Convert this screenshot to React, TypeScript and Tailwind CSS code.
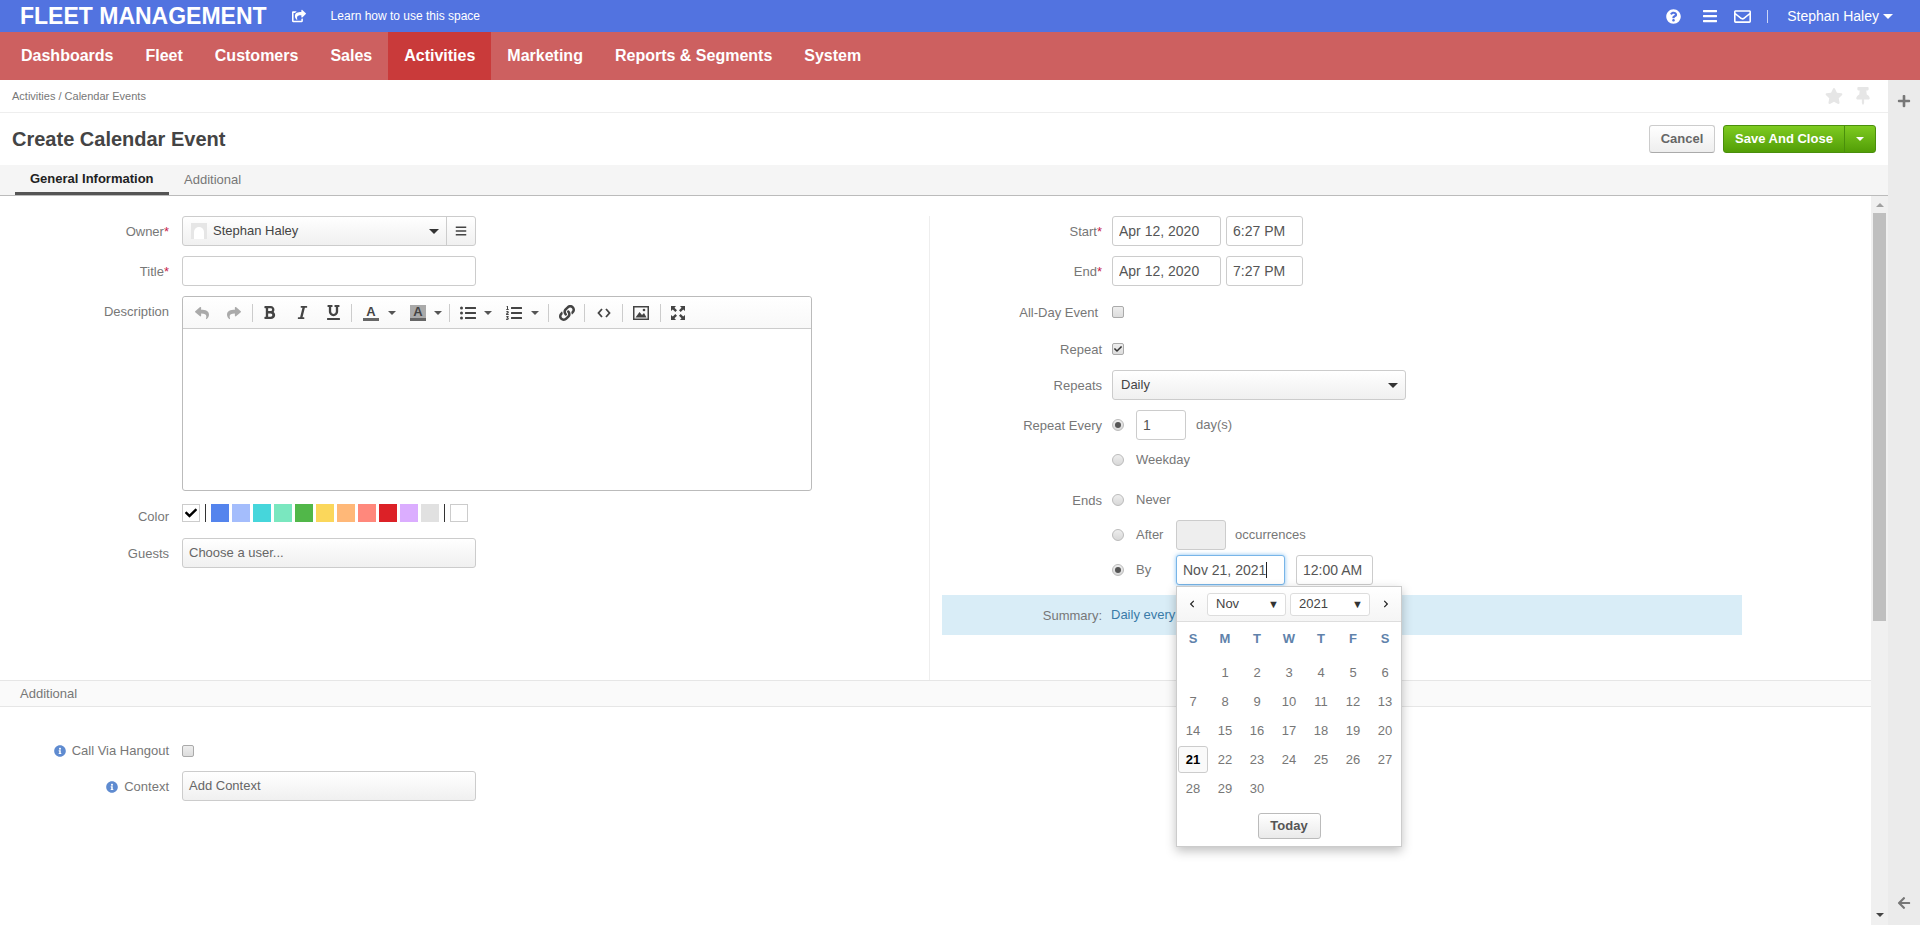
import type { ReactNode } from "react";
import {
  FaArrowLeft,
  FaBars,
  FaCheck,
  FaChevronLeft,
  FaChevronRight,
  FaInfoCircle,
  FaListOl,
  FaListUl,
  FaLink,
  FaPlus,
  FaQuestionCircle,
  FaRegEnvelope,
  FaReply,
  FaShare,
  FaShareSquare,
  FaStar,
  FaThumbtack,
  FaBold,
  FaItalic,
  FaUnderline,
} from "react-icons/fa";

const NAV = ["Dashboards", "Fleet", "Customers", "Sales", "Activities", "Marketing", "Reports & Segments", "System"];
const COLORS = [
  "bg-[#5484ed]",
  "bg-[#a4bdfc]",
  "bg-[#46d6db]",
  "bg-[#7ae7bf]",
  "bg-[#51b749]",
  "bg-[#fbd75b]",
  "bg-[#ffb878]",
  "bg-[#ff887c]",
  "bg-[#dc2127]",
  "bg-[#dbadff]",
  "bg-[#e1e1e1]",
];
const WEEK = ["S", "M", "T", "W", "T", "F", "S"];
const DAYS: (number | null)[] = [null, ...Array.from({ length: 30 }, (_, i) => i + 1)];

function Caret({ className = "" }: { className?: string }) {
  return <span className={`inline-block w-0 h-0 border-x-[5px] border-x-transparent border-t-[5px] ${className}`} />;
}

function SmallCaret({ className = "" }: { className?: string }) {
  return <span className={`inline-block w-0 h-0 border-x-[4px] border-x-transparent border-t-[4px] ${className}`} />;
}

function Label({ children, required, width, mr = "" }: { children: ReactNode; required?: boolean; width: string; mr?: string }) {
  return (
    <div className={`${width} ${mr} shrink-0 pt-px text-right text-[#777] text-[13px] leading-none`}>
      {children}
      {required && <span className="text-[#c81e4a]">*</span>}
    </div>
  );
}

function Checkbox({ checked }: { checked?: boolean }) {
  return (
    <div className="w-3 h-3 rounded-[2px] border border-[#aaa] bg-linear-to-b from-[#eee] to-[#ddd] flex items-center justify-center">
      {checked && <FaCheck className="w-2 h-2 text-[#333]" />}
    </div>
  );
}

function Radio({ checked }: { checked?: boolean }) {
  return (
    <div className="w-3 h-3 rounded-full border border-[#bbb] bg-linear-to-b from-[#eee] to-[#d8d8d8] flex items-center justify-center">
      {checked && <div className="w-1.5 h-1.5 rounded-full bg-[#555]" />}
    </div>
  );
}

function TextBox({ value, className }: { value?: string; className: string }) {
  return (
    <input
      readOnly
      value={value ?? ""}
      className={`h-[30px] px-[6px] border border-[#ccc] rounded-[3px] bg-white text-[#555] text-[14px] outline-none ${className}`}
    />
  );
}

function Sep() {
  return <div className="w-px h-[18px] bg-[#ccc]" />;
}

function Toolbar() {
  return (
    <div className="h-8 border-b border-[#ccc] rounded-t-[3px] bg-linear-to-b from-white to-[#f8f8f8] flex items-center text-[#444]">
      <div className="w-[18px] ml-[10px] flex justify-center"><FaReply className="w-3.5 h-3.5 text-[#aaa]" /></div>
      <div className="w-[18px] ml-[14px] flex justify-center"><FaShare className="w-3.5 h-3.5 text-[#aaa]" /></div>
      <div className="ml-[9px]"><Sep /></div>
      <div className="w-[16px] ml-[8px] flex justify-center"><FaBold className="w-[13px] h-[15px]" /></div>
      <div className="w-[16px] ml-[17px] flex justify-center"><FaItalic className="w-[13px] h-[15px]" /></div>
      <div className="w-[16px] ml-[15px] flex justify-center"><FaUnderline className="w-[13px] h-[15px]" /></div>
      <div className="ml-[10px]"><Sep /></div>
      <div className="ml-[11px] w-[16px] flex flex-col items-center">
        <span className="text-[13px] leading-[13px] font-bold">A</span>
        <div className="w-4 h-[3px] bg-[#666]" />
      </div>
      <SmallCaret className="ml-[9px] border-t-[#555]" />
      <div className="ml-[14px] w-[16px] flex flex-col items-center bg-[#aaa]">
        <span className="text-[13px] leading-[13px] font-bold">A</span>
        <div className="w-4 h-[3px] bg-[#666]" />
      </div>
      <SmallCaret className="ml-[8px] border-t-[#555]" />
      <div className="ml-[7px]"><Sep /></div>
      <FaListUl className="ml-[10px] w-4 h-4" />
      <SmallCaret className="ml-[8px] border-t-[#555]" />
      <FaListOl className="ml-[14px] w-4 h-4" />
      <SmallCaret className="ml-[9px] border-t-[#555]" />
      <div className="ml-[9px]"><Sep /></div>
      <FaLink className="ml-[10px] w-4 h-4" />
      <div className="ml-[9px]"><Sep /></div>
      <svg className="ml-[12px] w-3.5 h-3.5" viewBox="0 0 14 14" fill="none" stroke="currentColor" strokeWidth="1.8">
        <path d="M5 3 1.500 7 5 11M9 3l3.500 4L9 11" />
      </svg>
      <div className="ml-[11px]"><Sep /></div>
      <svg className="ml-[10px] w-4 h-[14px]" viewBox="0 0 16 14">
        <rect x="0.750" y="0.750" width="14.500" height="12.500" fill="none" stroke="#444" strokeWidth="1.500" />
        <path d="M2.500 11.500 6.500 6l2.500 3 2-2 2.500 4.500z" fill="#444" />
        <circle cx="11" cy="4" r="1.300" fill="#444" />
      </svg>
      <div className="ml-[11px]"><Sep /></div>
      <svg className="ml-[9px] w-4 h-4" viewBox="0 0 16 16" fill="currentColor">
        <path d="M1 1h5L4.500 2.800 7 5.300 5.300 7 2.800 4.500 1 6zM15 1v5l-1.800-1.500L10.700 7 9 5.300l2.500-2.500L10 1zM1 15v-5l1.800 1.500L5.300 9 7 10.700l-2.500 2.500L6 15zM15 15h-5l1.500-1.800L9 10.700 10.700 9l2.500 2.500L15 10z" />
      </svg>
    </div>
  );
}

function LeftColumn() {
  return (
    <div className="w-[930px] shrink-0 border-r border-[#eee] text-[13px]">
      <div className="flex items-center h-[30px]">
        <Label required width="w-[169px]" mr="mr-[13px]">Owner</Label>
        <div className="w-[294px] h-[30px] flex border border-[#ccc] rounded-[3px] bg-linear-to-b from-white to-[#f0f0f0]">
          <div className="flex-1 flex items-center pl-2 text-[#444] text-[13px]">
            <div className="w-4 h-4 mr-[6px] bg-[#e6e6e6] flex items-end justify-center overflow-hidden">
              <div className="w-2.5 h-3 rounded-t-full bg-white" />
            </div>
            <span>Stephan Haley</span>
            <Caret className="ml-auto mr-[7px] border-t-[#333]" />
          </div>
          <div className="w-[29px] border-l border-[#ccc] flex items-center justify-center text-[#444]">
            <FaBars className="w-3 h-3" />
          </div>
        </div>
      </div>
      <div className="flex items-center mt-[10px]">
        <Label required width="w-[169px]" mr="mr-[13px]">Title</Label>
        <TextBox className="w-[294px]" />
      </div>
      <div className="flex mt-[10px]">
        <div className="pt-[8px]"><Label width="w-[169px]" mr="mr-[13px]">Description</Label></div>
        <div className="w-[630px] h-[195px] border border-[#bbb] rounded-[3px]">
          <Toolbar />
        </div>
      </div>
      <div className="flex mt-[13px] h-[18px]">
        <div className="pt-[5px]"><Label width="w-[169px]" mr="mr-[13px]">Color</Label></div>
        <div className="flex items-center h-[18px]">
          <div className="w-[18px] h-[18px] border border-[#ccc] flex items-center justify-center">
            <FaCheck className="w-3 h-3 text-black" />
          </div>
          <div className="w-px h-[18px] bg-[#333] mx-[5px]" />
          <div className="flex gap-[3px]">
            {COLORS.map((c) => (
              <div key={c} className={`w-[18px] h-[18px] ${c}`} />
            ))}
          </div>
          <div className="w-px h-[18px] bg-[#333] ml-[5px] mr-[5px]" />
          <div className="w-[18px] h-[18px] border border-[#ccc] bg-white" />
        </div>
      </div>
      <div className="flex items-center mt-4">
        <Label width="w-[169px]" mr="mr-[13px]">Guests</Label>
        <div className="w-[294px] h-[30px] px-[6px] flex items-center border border-[#ccc] rounded-[3px] bg-linear-to-b from-white to-[#f0f0f0] text-[#666] text-[13px]">
          Choose a user...
        </div>
      </div>
    </div>
  );
}

function Calendar() {
  return (
    <div className="absolute left-0 top-[31px] z-10 w-[226px] h-[261px] border border-[#ccc] bg-white shadow-[0_4px_10px_rgba(0,0,0,0.25)] text-[13px]">
      <div className="h-[35px] border-b border-[#ddd] bg-linear-to-b from-white to-[#f5f5f5] flex items-center">
        <FaChevronLeft className="ml-[11px] w-2 h-2 text-[#222]" />
        <div className="ml-[11px] w-[79px] h-[23px] border border-[#ddd] rounded-[3px] bg-white flex items-center pl-2 text-[#444] text-[13px]">
          Nov
          <span className="ml-auto mr-[6px] text-[11px] text-[#333]">▼</span>
        </div>
        <div className="ml-1 w-[80px] h-[23px] border border-[#ddd] rounded-[3px] bg-white flex items-center pl-2 text-[#444] text-[13px]">
          2021
          <span className="ml-auto mr-[6px] text-[11px] text-[#333]">▼</span>
        </div>
        <FaChevronRight className="ml-[12px] w-2 h-2 text-[#222]" />
      </div>
      <div className="grid grid-cols-[repeat(7,32px)] pt-[4px]">
        {WEEK.map((d, i) => (
          <div key={i} className="h-[26px] flex items-center justify-center font-bold text-[#5f82ab] text-[13px]">
            {d}
          </div>
        ))}
      </div>
      <div className="grid grid-cols-[repeat(7,32px)] auto-rows-[29px] pt-[6px]">
        {DAYS.map((d, i) =>
          d === 21 ? (
            <div key={i} className="flex items-center justify-center">
              <span className="w-[30px] h-[27px] flex items-center justify-center border border-[#ccc] rounded-[3px] bg-[#fafafa] font-bold text-black">
                {d}
              </span>
            </div>
          ) : (
            <div key={i} className="flex items-center justify-center text-[#777]">
              {d}
            </div>
          ),
        )}
      </div>
      <div className="flex justify-center mt-[10px]">
        <button className="w-[63px] h-[26px] border border-[#bbb] rounded-[3px] bg-linear-to-b from-white to-[#eaeaea] text-[#555] font-bold text-[13px]">
          Today
        </button>
      </div>
    </div>
  );
}

function RightColumn() {
  const w = "w-[172px]";
  const mr = "mr-[10px]";
  return (
    <div className="flex-1 text-[13px] text-[#777]">
      <div className="flex items-center">
        <Label required width={w} mr={mr}>Start</Label>
        <TextBox value="Apr 12, 2020" className="w-[109px]" />
        <TextBox value="6:27 PM" className="w-[77px] ml-[5px]" />
      </div>
      <div className="flex items-center mt-[10px]">
        <Label required width={w} mr={mr}>End</Label>
        <TextBox value="Apr 12, 2020" className="w-[109px]" />
        <TextBox value="7:27 PM" className="w-[77px] ml-[5px]" />
      </div>
      <div className="flex items-center mt-[20px] h-3">
        <Label width="w-[168px]" mr="mr-[14px]">All-Day Event</Label>
        <Checkbox />
      </div>
      <div className="flex items-center mt-[25px] h-3">
        <Label width={w} mr={mr}>Repeat</Label>
        <Checkbox checked />
      </div>
      <div className="flex items-center mt-[15px]">
        <Label width={w} mr={mr}>Repeats</Label>
        <div className="w-[294px] h-[30px] pl-2 flex items-center border border-[#ccc] rounded-[3px] bg-linear-to-b from-white to-[#f0f0f0] text-[#444]">
          Daily
          <Caret className="ml-auto mr-[7px] border-t-[#333]" />
        </div>
      </div>
      <div className="flex items-center mt-[10px]">
        <Label width={w} mr={mr}>Repeat Every</Label>
        <Radio checked />
        <TextBox value="1" className="w-[50px] ml-3" />
        <span className="ml-[10px]">day(s)</span>
      </div>
      <div className="flex items-center mt-[10px] h-5">
        <div className={`${w} ${mr} shrink-0`} />
        <Radio />
        <span className="ml-3">Weekday</span>
      </div>
      <div className="flex items-center mt-[20px] h-5">
        <Label width={w} mr={mr}>Ends</Label>
        <Radio />
        <span className="ml-3">Never</span>
      </div>
      <div className="flex items-center mt-[10px]">
        <div className={`${w} ${mr} shrink-0`} />
        <Radio />
        <span className="ml-3 w-[40px]">After</span>
        <div className="w-[50px] h-[30px] border border-[#ccc] rounded-[3px] bg-[#eee]" />
        <span className="ml-[9px]">occurrences</span>
      </div>
      <div className="flex items-center mt-[5px]">
        <div className={`${w} ${mr} shrink-0`} />
        <Radio checked />
        <span className="ml-3 w-[40px]">By</span>
        <div className="relative">
          <div className="w-[109px] h-[30px] pl-[6px] flex items-center border border-[#78b5e8] rounded-[3px] bg-white text-[#555] text-[14px] shadow-[0_0_4px_rgba(82,168,236,0.7)]">
            Nov 21, 2021
            <span className="w-px h-4 bg-[#222]" />
          </div>
          <Calendar />
        </div>
        <TextBox value="12:00 AM" className="w-[77px] ml-[11px]" />
      </div>
      <div className="flex items-center ml-[12px] mt-[10px] w-[800px] h-10 bg-[#d9edf7]">
        <div className="w-[160px] mr-[9px] shrink-0 pt-[2px] text-right">Summary:</div>
        <span className="text-[#3a7ba8]">Daily every</span>
      </div>
    </div>
  );
}

export default function App() {
  return (
    <div className="w-[1920px] h-[925px] overflow-hidden flex flex-col bg-white font-['Liberation_Sans',Arial,sans-serif]">
      {/* Top bar */}
      <div className="h-8 shrink-0 bg-[#5273e0] text-white flex items-center">
        <div className="ml-5 text-[23px] font-bold leading-none">FLEET MANAGEMENT</div>
        <FaShareSquare className="ml-[25px] w-[14px] h-[14px]" />
        <div className="ml-[25px] text-[12px]">Learn how to use this space</div>
        <div className="ml-auto flex items-center">
          <FaQuestionCircle className="w-[15px] h-[15px]" />
          <FaBars className="ml-[21px] w-4 h-4" />
          <FaRegEnvelope className="ml-[16px] w-[17px] h-[17px]" />
          <div className="ml-[16px] w-px h-[13px] bg-white/70" />
          <div className="ml-[19px] text-[14px]">Stephan Haley</div>
          <Caret className="ml-[4px] mr-[27px] border-t-white" />
        </div>
      </div>

      {/* Main nav */}
      <div className="h-12 shrink-0 bg-[#cd6060] flex pl-[5px]">
        {NAV.map((item) => (
          <div
            key={item}
            className={`px-4 flex items-center text-white text-[16px] font-bold ${item === "Activities" ? "bg-[#c93a3a]" : ""}`}
          >
            {item}
          </div>
        ))}
      </div>

      <div className="flex-1 flex min-h-0">
        <div className="flex-1 flex flex-col min-w-0">
          {/* Breadcrumbs */}
          <div className="h-[33px] shrink-0 border-b border-[#eee] flex items-center px-3 text-[11px] text-[#777]">
            <span>Activities / Calendar Events</span>
            <FaStar className="ml-auto w-[18px] h-[18px] text-[#e6e6e6]" />
            <FaThumbtack className="ml-[12px] mr-[5px] w-[16px] h-[18px] text-[#e6e6e6]" />
          </div>

          {/* Page title */}
          <div className="h-[52px] shrink-0 flex items-center pl-3 pr-[12px]">
            <h1 className="text-[20px] font-bold text-[#444]">Create Calendar Event</h1>
            <button className="ml-auto w-[66px] h-[28px] border border-[#ccc] border-b-[#aaa] rounded-[3px] bg-linear-to-b from-white to-[#eee] text-[#666] text-[13px] font-bold">
              Cancel
            </button>
            <div className="ml-2 h-[28px] flex rounded-[3px] border border-[#4a8f0c] bg-linear-to-b from-[#7ecb20] to-[#529e06] text-white text-[13px] font-bold">
              <div className="w-[120px] flex items-center justify-center">Save And Close</div>
              <div className="w-[31px] border-l border-[#4a8f0c] flex items-center justify-center">
                <SmallCaret className="border-t-white" />
              </div>
            </div>
          </div>

          {/* Tabs */}
          <div className="h-[31px] shrink-0 bg-[#f5f5f5] border-b border-[#bbb] flex pl-[15px] text-[13px]">
            <div className="w-[154px] pl-[15px] h-[30px] border-b-[3px] border-[#555] flex items-center font-bold text-[#222]">General Information</div>
            <div className="ml-[15px] h-[30px] flex items-center text-[#777]">Additional</div>
          </div>

          <div className="flex-1 flex min-h-0">
            {/* Form */}
            <div className="flex-1 min-w-0">
              <div className="flex h-[464px] mt-5">
                <LeftColumn />
                <RightColumn />
              </div>
              <div className="h-[27px] bg-[#fafafa] border-y border-[#e6e6e6] flex items-center pl-5 text-[13px] text-[#777]">
                Additional
              </div>
              <div className="mt-[38px] flex items-center h-3">
                <div className="w-[169px] mr-[13px] flex items-center justify-end gap-[6px] text-[13px] text-[#777]">
                  <FaInfoCircle className="w-3 h-3 text-[#5f8bd0]" />
                  Call Via Hangout
                </div>
                <Checkbox />
              </div>
              <div className="mt-[14px] flex items-center">
                <div className="w-[169px] mr-[13px] pt-[2px] flex items-center justify-end gap-[6px] text-[13px] text-[#777]">
                  <FaInfoCircle className="w-3 h-3 text-[#5f8bd0]" />
                  Context
                </div>
                <div className="w-[294px] h-[30px] px-[6px] flex items-center border border-[#ccc] rounded-[3px] bg-linear-to-b from-white to-[#f0f0f0] text-[#666] text-[13px]">
                  Add Context
                </div>
              </div>
            </div>

            {/* Scrollbar */}
            <div className="w-[17px] shrink-0 bg-[#f0f0f0] flex flex-col items-center">
              <span className="mt-[7px] w-0 h-0 border-x-[4px] border-x-transparent border-b-[4px] border-b-[#a0a0a0]" />
              <div className="w-[13px] h-[408px] mt-[6px] bg-[#bfbfbf]" />
              <SmallCaret className="mt-auto mb-[8px] border-t-[#444]" />
            </div>
          </div>
        </div>

        {/* Right side panel */}
        <div className="w-8 shrink-0 bg-[#ebebeb] flex flex-col items-center justify-between pt-[14px] pb-[15px] text-[#777]">
          <FaPlus className="w-[14px] h-[14px]" />
          <FaArrowLeft className="w-[14px] h-[14px]" />
        </div>
      </div>
    </div>
  );
}
